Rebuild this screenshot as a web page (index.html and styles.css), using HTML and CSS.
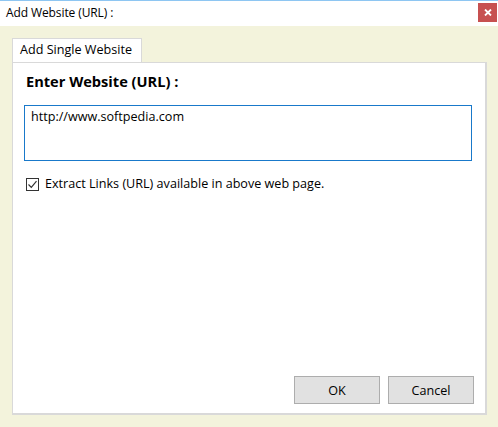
FILE: index.html
```html
<!DOCTYPE html>
<html>
<head>
<meta charset="utf-8">
<link rel="stylesheet" href="styles.css">
</head>
<body>
<div class="window">
  <div class="titlebar">
    <span class="title">Add Website (URL) :</span>
    <div class="close"><svg width="8" height="7" viewBox="0 0 8 7"><path d="M1 0.5 L7 6.5 M7 0.5 L1 6.5" stroke="#fff" stroke-width="1.8"/></svg></div>
  </div>
  <div class="body">
    <div class="tabs"><div class="tab">Add Single Website</div></div>
    <div class="panel">
      <div class="heading">Enter Website (URL) :</div>
      <div class="urlbox">http://www.softpedia.com</div>
      <label class="check">
        <span class="box"><svg width="11" height="11" viewBox="0 0 11 11"><path d="M1.5 5.5 L4.3 8.3 L9.5 2.2" fill="none" stroke="#333" stroke-width="1.2"/></svg></span>
        <span>Extract Links (URL) available in above web page.</span>
      </label>
      <div class="buttons">
        <div class="btn">OK</div>
        <div class="btn">Cancel</div>
      </div>
    </div>
  </div>
</div>
</body>
</html>
```
FILE: styles.css
```css
html, body {
  margin: 0;
  padding: 0;
}
body {
  width: 498px;
  height: 427px;
  overflow: hidden;
  font-family: "Open Sans", "Noto Sans", sans-serif;
  font-size: 12.6px;
  color: #000;
  background: #f3f3dc;
}
.window {
  height: 427px;
  display: flex;
  flex-direction: column;
  border-top: 1px solid #8ec6f2;
  box-sizing: border-box;
}
.titlebar {
  height: 25px;
  background: #fff;
  display: flex;
  align-items: flex-start;
  justify-content: space-between;
}
.title {
  margin-left: 6px;
  margin-top: 4px;
  font-size: 12px;
  line-height: 16px;
  letter-spacing: -0.1px;
}
.close {
  width: 19px;
  height: 19px;
  margin-top: 2px;
  margin-right: 1px;
  background: #c75050;
  display: flex;
  align-items: center;
  justify-content: center;
}
.body {
  flex: 1;
  padding: 12px 11px 12px 12px;
  display: flex;
  flex-direction: column;
}
.tabs {
  display: flex;
  height: 24px;
}
.tab {
  width: 130px;
  box-sizing: border-box;
  border: 1px solid #d9d9d9;
  border-bottom: none;
  background: #fff;
  padding-left: 7px;
  padding-top: 3px;
  font-size: 12.6px;
  line-height: 16px;
}
.panel {
  flex: 1;
  background: #fff;
  border: 1px solid #d9d9d9;
  border-right-width: 2px;
  border-bottom-width: 2px;
  display: flex;
  flex-direction: column;
  padding: 8px 11px 9px 11px;
}
.heading {
  font-weight: bold;
  font-size: 14.6px;
  line-height: 20px;
  padding-left: 2px;
}
.urlbox {
  margin-top: 14px;
  margin-right: 2px;
  height: 56px;
  box-sizing: border-box;
  border: 1px solid #1979ca;
  padding: 3px 6px;
  font-size: 12.6px;
  line-height: 16px;
}
.check {
  margin-top: 15px;
  display: flex;
  align-items: center;
  gap: 6px;
  padding-left: 2px;
  font-size: 12.6px;
  line-height: 16px;
}
.box {
  width: 13px;
  height: 13px;
  box-sizing: border-box;
  border: 1px solid #333;
  display: flex;
  align-items: center;
  justify-content: center;
}
.buttons {
  margin-top: auto;
  display: flex;
  justify-content: flex-end;
  gap: 8px;
}
.btn {
  width: 86px;
  height: 28px;
  box-sizing: border-box;
  background: #e1e1e1;
  border: 1px solid #adadad;
  display: flex;
  align-items: center;
  justify-content: center;
  font-size: 12.6px;
}
```
